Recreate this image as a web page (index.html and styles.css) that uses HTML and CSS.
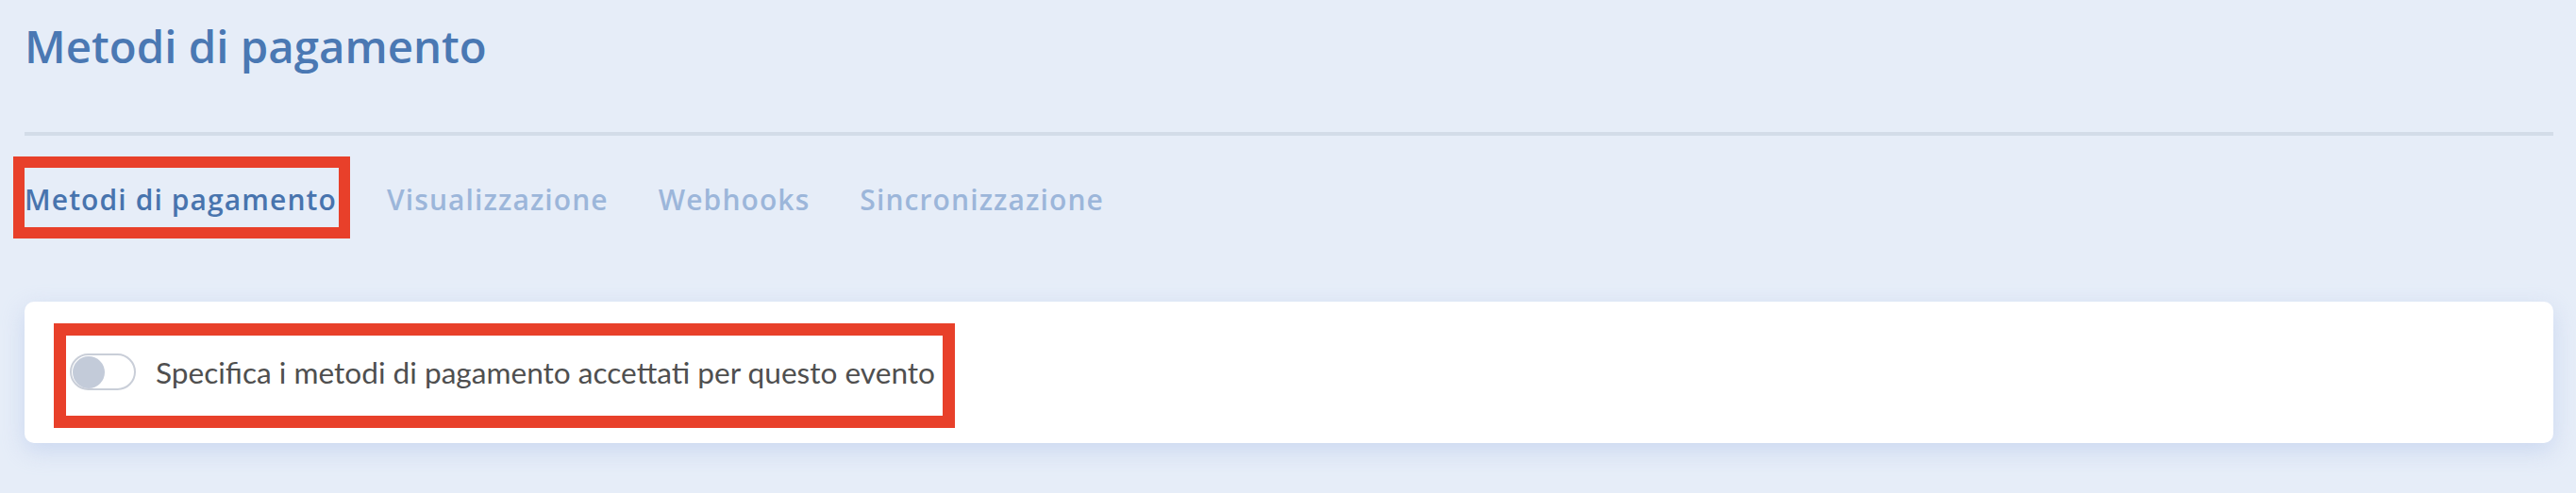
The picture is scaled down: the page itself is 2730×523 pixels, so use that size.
FILE: index.html
```html
<!DOCTYPE html>
<html lang="it">
<head>
    <meta charset="UTF-8">
    <title>Metodi di pagamento</title>
    <link rel="stylesheet" href="styles.css">
</head>
<body>
    <div class="page">
        <div class="header">
            <h1>Metodi di pagamento</h1>
        </div>

        <nav class="tabs">
            <a class="tab active highlight">Metodi di pagamento</a>
            <a class="tab">Visualizzazione</a>
            <a class="tab">Webhooks</a>
            <a class="tab">Sincronizzazione</a>
        </nav>

        <div class="card">
            <label class="switch-row highlight-row">
                <span class="switch"><span class="knob"></span></span>
                <span class="switch-label">Specifica i metodi di pagamento accettati per questo evento</span>
            </label>
        </div>
    </div>
</body>
</html>
```

FILE: styles.css
```css
* {
    margin: 0;
    padding: 0;
    box-sizing: border-box;
}

body {
    background: #e6edf8;
    font-family: Lato, 'Open Sans', sans-serif;
    width: 2730px;
    height: 523px;
    overflow: hidden;
}

.page {
    padding: 0 24px 0 26px;
}

.header {
    padding-top: 21px;
    padding-bottom: 63px;
    border-bottom: 4px solid #d3dce8;
}

.header h1 {
    font-family: 'Open Sans', sans-serif;
    font-weight: 600;
    font-size: 47.4px;
    line-height: 56px;
    color: #4a78b3;
}

.tabs {
    display: flex;
    gap: 51px;
    margin-top: 34px;
}

.tab {
    font-family: 'Open Sans', sans-serif;
    font-size: 30px;
    font-weight: 600;
    letter-spacing: 1.1px;
    line-height: 40px;
    padding: 14px 2px 9px 0;
    color: #9cb6da;
    cursor: pointer;
}

.tab.active {
    color: #4874ae;
}

/* red annotation boxes */
.highlight {
    outline: 12px solid #e8402a;
    outline-offset: 0;
}

.highlight-row {
    outline: 13px solid #e8402a;
}

.card {
    margin-top: 79px;
    height: 150px;
    background: white;
    border-radius: 10px;
    box-shadow: 0 8px 24px rgba(170, 190, 230, 0.45);
    padding: 36px 0 0 44px;
}

.switch-row {
    display: inline-flex;
    align-items: center;
    gap: 21px;
    padding: 19px 8px 27px 4px;
}

.switch {
    width: 70px;
    height: 39px;
    border: 2px solid #c9ced8;
    border-radius: 20px;
    display: flex;
    align-items: center;
    padding-left: 1px;
}

.knob {
    width: 34px;
    height: 34px;
    border-radius: 50%;
    background: #c3cbd9;
}

.switch-label {
    font-size: 31.6px;
    color: #4f4f4f;
}
```
